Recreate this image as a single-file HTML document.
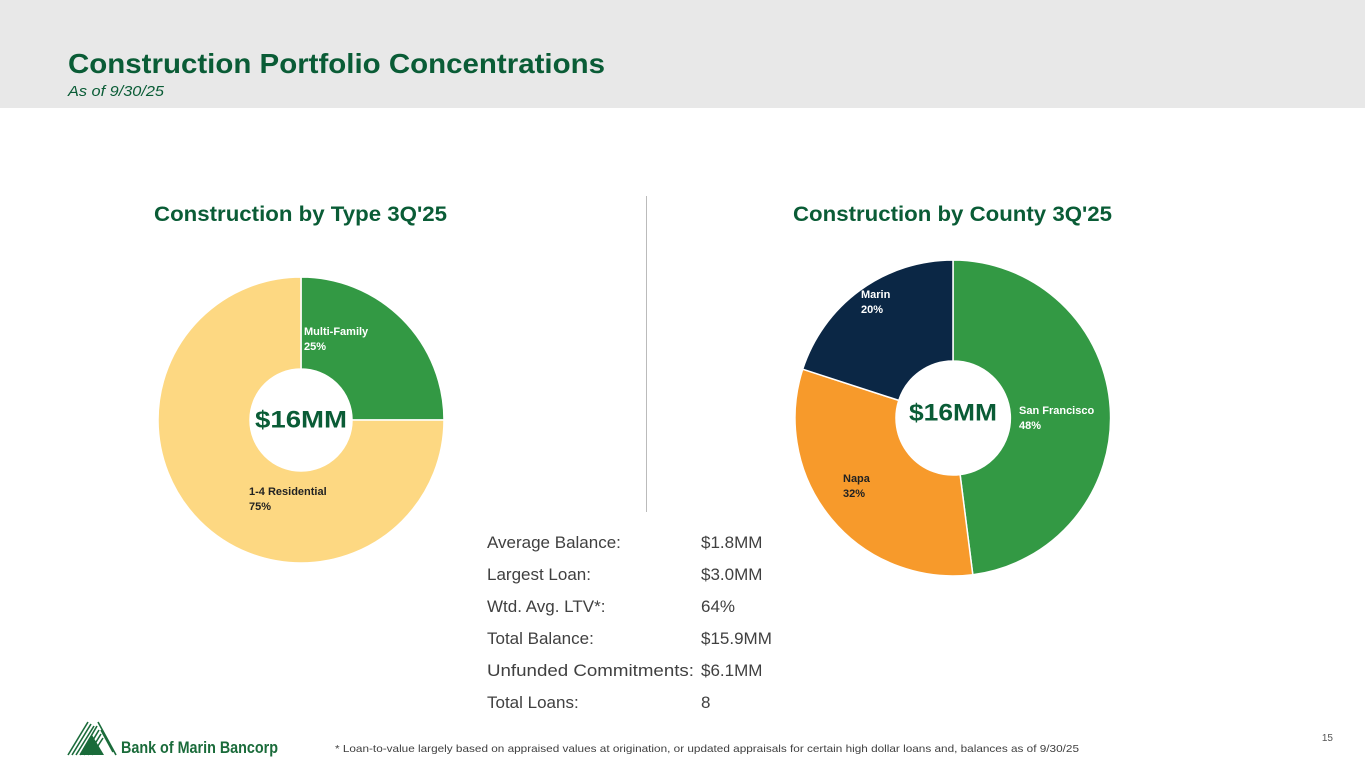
<!DOCTYPE html>
<html><head><meta charset="utf-8"><style>
html,body{margin:0;padding:0;background:#fff}
svg{display:block}
text{font-family:"Liberation Sans",sans-serif}
</style></head><body>
<svg width="1365" height="768" viewBox="0 0 1365 768" xmlns="http://www.w3.org/2000/svg">
<rect x="0" y="0" width="1365" height="108" fill="#e8e8e8"/>
<text x="68" y="73" font-size="28" font-weight="bold" fill="#0a5c36" textLength="537" lengthAdjust="spacingAndGlyphs">Construction Portfolio Concentrations</text>
<text x="68" y="96" font-size="15" font-style="italic" fill="#0a5c36" textLength="96" lengthAdjust="spacingAndGlyphs">As of 9/30/25</text>

<text x="154" y="221" font-size="21" font-weight="bold" fill="#0a5c36" textLength="293" lengthAdjust="spacingAndGlyphs">Construction by Type 3Q'25</text>
<text x="793" y="221" font-size="21" font-weight="bold" fill="#0a5c36" textLength="319" lengthAdjust="spacingAndGlyphs">Construction by County 3Q'25</text>
<line x1="646.5" y1="196" x2="646.5" y2="512" stroke="#bbb" stroke-width="1"/>

<!-- Left donut: c(301,420) r143 ri51 -->
<path d="M301,277 A143,143 0 0 1 444,420 L352,420 A51,51 0 0 0 301,369 Z" fill="#339944" stroke="#fff" stroke-width="1.5"/>
<path d="M444,420 A143,143 0 1 1 301,277 L301,369 A51,51 0 1 0 352,420 Z" fill="#fdd882" stroke="#fff" stroke-width="1.5"/>
<text x="301" y="420" font-size="24" font-weight="bold" fill="#0a5c36" text-anchor="middle" dominant-baseline="central" textLength="92" lengthAdjust="spacingAndGlyphs">$16MM</text>
<text x="304" y="335" font-size="11" font-weight="bold" fill="#fff">Multi-Family</text>
<text x="304" y="350" font-size="11" font-weight="bold" fill="#fff">25%</text>
<text x="249" y="495" font-size="11" font-weight="bold" fill="#222">1-4 Residential</text>
<text x="249" y="510" font-size="11" font-weight="bold" fill="#222">75%</text>

<!-- Right donut: c(953,418) r158 ri57 -->
<path d="M953,260 A158,158 0 0 1 972.8,574.7 L960.1,474.6 A57,57 0 0 0 953,361 Z" fill="#339944" stroke="#fff" stroke-width="1.5"/>
<path d="M972.8,574.7 A158,158 0 0 1 802.7,369.2 L898.8,400.4 A57,57 0 0 0 960.1,474.6 Z" fill="#f79a2b" stroke="#fff" stroke-width="1.5"/>
<path d="M802.7,369.2 A158,158 0 0 1 953,260 L953,361 A57,57 0 0 0 898.8,400.4 Z" fill="#0b2745" stroke="#fff" stroke-width="1.5"/>
<text x="953" y="413" font-size="24" font-weight="bold" fill="#0a5c36" text-anchor="middle" dominant-baseline="central" textLength="88" lengthAdjust="spacingAndGlyphs">$16MM</text>
<text x="1019" y="414" font-size="11" font-weight="bold" fill="#fff">San Francisco</text>
<text x="1019" y="429" font-size="11" font-weight="bold" fill="#fff">48%</text>
<text x="843" y="482" font-size="11" font-weight="bold" fill="#222">Napa</text>
<text x="843" y="497" font-size="11" font-weight="bold" fill="#222">32%</text>
<text x="861" y="298" font-size="11" font-weight="bold" fill="#fff">Marin</text>
<text x="861" y="313" font-size="11" font-weight="bold" fill="#fff">20%</text>

<g font-size="17" fill="#404040">
<text x="487" y="548">Average Balance:</text><text x="701" y="548">$1.8MM</text>
<text x="487" y="580">Largest Loan:</text><text x="701" y="580">$3.0MM</text>
<text x="487" y="612">Wtd. Avg. LTV*:</text><text x="701" y="612">64%</text>
<text x="487" y="644">Total Balance:</text><text x="701" y="644">$15.9MM</text>
<text x="487" y="676" textLength="207" lengthAdjust="spacingAndGlyphs">Unfunded Commitments:</text><text x="701" y="676">$6.1MM</text>
<text x="487" y="708">Total Loans:</text><text x="701" y="708">8</text>
</g>

<!-- logo -->
<g fill="#1a6b3a">
<path d="M68,755 L88,722 L93,728 L98,720 L118,755 Z" fill="none" stroke="#1a6b3a" stroke-width="0"/>
<g stroke="#1a6b3a" stroke-width="1.6">
<line x1="68" y1="755" x2="88" y2="722"/><line x1="72" y1="755" x2="91" y2="724"/><line x1="76" y1="755" x2="94" y2="726"/><line x1="80" y1="755" x2="97" y2="726"/><line x1="84" y1="755" x2="99" y2="730"/><line x1="88" y1="755" x2="101" y2="734"/><line x1="92" y1="755" x2="103" y2="738"/>
<line x1="98" y1="722" x2="116" y2="755"/><line x1="101" y1="730" x2="113" y2="752"/>
</g>
<path d="M80,755 L92,735 L104,755 Z"/>
<text x="121" y="753" font-size="17" font-weight="bold" fill="#1a6b3a" textLength="157" lengthAdjust="spacingAndGlyphs" font-family="Liberation Sans Narrow, Liberation Sans, sans-serif">Bank of Marin Bancorp</text>
</g>
<text x="335" y="752" font-size="10.5" fill="#404040" textLength="744" lengthAdjust="spacingAndGlyphs">*  Loan-to-value largely based on appraised values at origination, or updated appraisals for certain high dollar loans and, balances as of 9/30/25</text>
<text x="1333" y="741" font-size="10" fill="#555" text-anchor="end">15</text>
</svg>
</body></html>
